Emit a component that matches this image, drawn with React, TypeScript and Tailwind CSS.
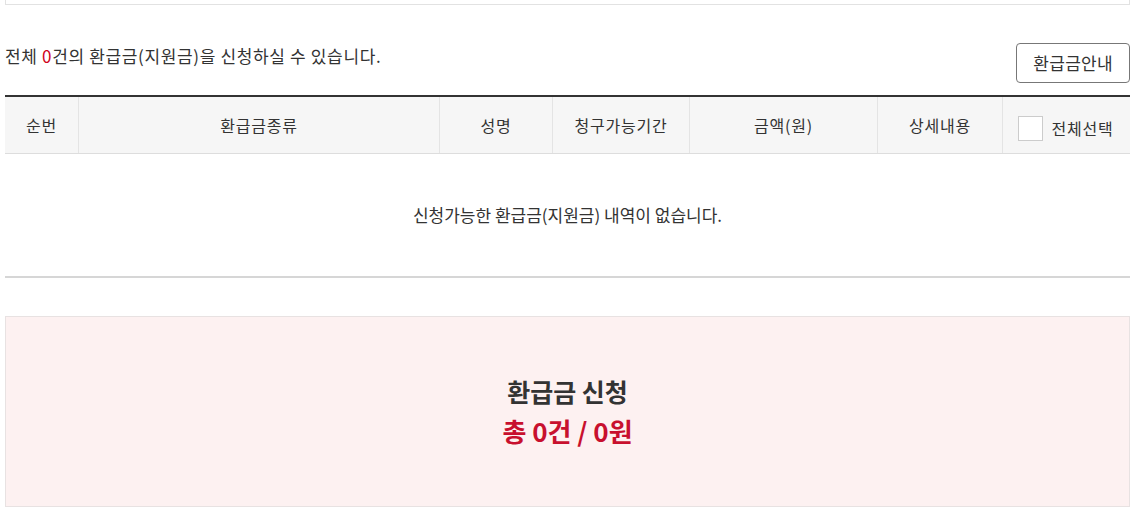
import React from 'react'

const cols = [
    { label: '순번', w: 'w-[74px]' },
    { label: '환급금종류', w: 'w-[361px]' },
    { label: '성명', w: 'w-[113px]' },
    { label: '청구가능기간', w: 'w-[137px]' },
    { label: '금액(원)', w: 'w-[188px]' },
    { label: '상세내용', w: 'w-[125px]' },
]

export default function App() {
    return (
        <div className="min-h-[513px] w-full bg-white font-['Noto_Sans_CJK_KR','Noto_Sans',sans-serif] text-[#333]">
            <div className="ml-[5px] w-[1125px]">
                {/* previous section's box edge */}
                <div className="h-[5px] border-x border-b border-[#e2e2e2]" />

                <div className="mt-[38px] flex items-start justify-between">
                    <p className="mt-[1px] text-[17px] leading-6 tracking-[0.65px]">
                        전체 <span className="text-[#d0021b]">0</span>건의 환급금(지원금)을 신청하실 수 있습니다.
                    </p>
                    <button className="h-[40px] rounded-[4px] border border-[#777] px-[16px] text-[17px] tracking-[0.3px] text-[#333]">
                        환급금안내
                    </button>
                </div>

                {/* Table */}
                <div className="mt-[12px] border-t-2 border-[#333]">
                    <div className="flex h-[57px] border-b border-[#ddd] bg-[#f6f6f6] text-[16px] tracking-[0.8px]">
                        {cols.map((c) => (
                            <div
                                key={c.label}
                                className={`${c.w} flex shrink-0 items-center justify-center border-r border-[#e4e4e4] pb-[1px]`}
                            >
                                {c.label}
                            </div>
                        ))}
                        <div className="flex flex-1 items-center justify-center gap-[8px] pt-[6px] pr-[1px]">
                            <span className="h-[25px] w-[25px] border border-[#ccc] bg-white" />
                            <span>전체선택</span>
                        </div>
                    </div>
                    <div className="flex h-[124px] items-center justify-center border-b-2 border-[#d6d6d6] pb-[1px] text-[17px]">
                        신청가능한 환급금(지원금) 내역이 없습니다.
                    </div>
                </div>

                {/* Apply summary */}
                <div className="mt-[38px] flex h-[191px] flex-col items-center justify-center border border-[#e8e2e2] bg-[#fdf1f1] pb-[2px]">
                    <p className="text-[25px] font-bold leading-[40px] text-[#333]">환급금 신청</p>
                    <p className="text-[26px] font-bold leading-[40px] text-[#c8102e]">총 0건 / 0원</p>
                </div>
            </div>
        </div>
    )
}
